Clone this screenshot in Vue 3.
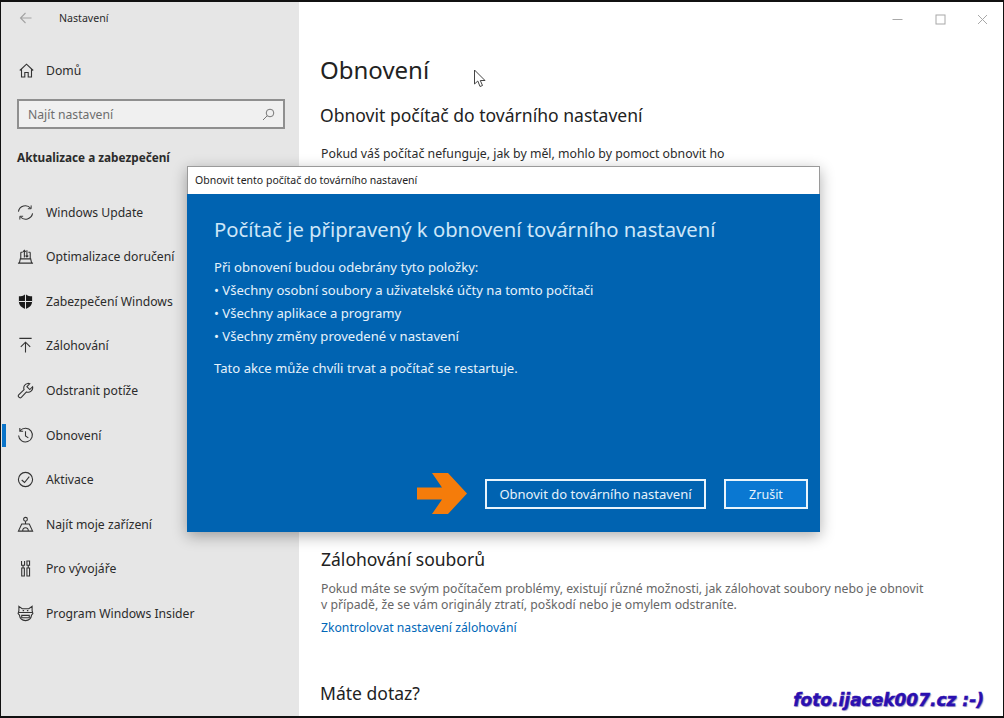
<script setup>
const nav = [
  { label: 'Windows Update', icon: 'update' },
  { label: 'Optimalizace doručení', icon: 'delivery' },
  { label: 'Zabezpečení Windows', icon: 'shield' },
  { label: 'Zálohování', icon: 'backup' },
  { label: 'Odstranit potíže', icon: 'wrench' },
  { label: 'Obnovení', icon: 'history', active: true },
  { label: 'Aktivace', icon: 'check' },
  { label: 'Najít moje zařízení', icon: 'find' },
  { label: 'Pro vývojáře', icon: 'dev' },
  { label: 'Program Windows Insider', icon: 'insider' },
]
const bullets = [
  '• Všechny osobní soubory a uživatelské účty na tomto počítači',
  '• Všechny aplikace a programy',
  '• Všechny změny provedené v nastavení',
]
</script>

<template>
  <div class="frame">
    <aside class="side">
      <div class="titlebar">
        <svg class="back" width="13" height="12" viewBox="0 0 13 12" fill="none" stroke="#a3a3a3" stroke-width="1.1"><path d="M12.500 6H1.500M6.500 1 1.500 6l5 5"/></svg>
        <span>Nastavení</span>
      </div>
      <div class="home">
        <svg width="15" height="15" viewBox="0 0 15 15" fill="none" stroke="#333" stroke-width="1.1"><path d="M.8 7.500 7.500 1.200 14.200 7.500M2.500 6V14H5.800V9.500H9.200V14H12.500V6"/></svg>
        <span>Domů</span>
      </div>
      <div class="search">
        <span>Najít nastavení</span>
        <svg width="13" height="13" viewBox="0 0 13 13" fill="none" stroke="#777" stroke-width="1"><circle cx="8" cy="5" r="3.800"/><path d="M5.200 7.800 1 12"/></svg>
      </div>
      <div class="section">Aktualizace a zabezpečení</div>
      <nav class="nav">
        <div v-for="n in nav" :key="n.label" class="item" :class="{ active: n.active }">
          <svg class="ico" width="17" height="17" viewBox="0 0 18 18" fill="none" stroke="#333" stroke-width="1.150">
            <template v-if="n.icon === 'update'">
              <path d="M1.500 8A7.500 7.500 0 0 1 14.500 4.500M16.500 10A7.500 7.500 0 0 1 3.500 13.500"/>
              <path d="M15 1.500V5H11.500M3 16.500V13H6.500" stroke-width="1"/>
            </template>
            <template v-else-if="n.icon === 'delivery'">
              <path d="M1 16H17M2.500 16 3.500 11.500H14.500L15.500 16M4 4.500V11.500M14 4.500V11.500M4 4.500H6M12 4.500H14M7.800 10V2.500M6.300 4 7.800 2.500 9.300 4M10.500 2.500V9.500M9 8 10.500 9.500 12 8"/>
            </template>
            <template v-else-if="n.icon === 'shield'">
              <path d="M9 1C7 3 4 3.500 2 3.500V9c0 4 3 6.500 7 8 4-1.500 7-4 7-8V3.500C14 3.500 11 3 9 1Z" fill="#1a1a1a" stroke="none"/>
              <path d="M9 1V17M2 9H16" stroke="#e6e6e6" stroke-width="1.100"/>
            </template>
            <template v-else-if="n.icon === 'backup'">
              <path d="M2.500 1.500H15.500M9 16.500V5.500M4 10.500 9 5.500 14 10.500"/>
            </template>
            <template v-else-if="n.icon === 'wrench'">
              <path d="M11.500 1.500a4.800 4.800 0 0 0-4 6.500L1.800 13.500a2 2 0 0 0 2.800 2.800L10 10.500a4.800 4.800 0 0 0 6.500-5.500L13.500 8 10.500 5 13.500 1.800a4.800 4.800 0 0 0-2-.3Z"/>
            </template>
            <template v-else-if="n.icon === 'history'">
              <path d="M3.300 4A7.300 7.300 0 1 1 1.700 9M3 1V4.500H6.500M9 4.500V9.500L12 11.500"/>
            </template>
            <template v-else-if="n.icon === 'check'">
              <circle cx="9" cy="9" r="7.500"/><path d="M5 9.500 8 12.200 13 6"/>
            </template>
            <template v-else-if="n.icon === 'find'">
              <circle cx="9" cy="3.500" r="2"/><path d="M9 5.500V9M5 8.500H13L16.500 16H1.500ZM6 16c0-2 1-3.500 3-3.500s3 1.500 3 3.500"/>
            </template>
            <template v-else-if="n.icon === 'dev'">
              <path d="M4.800 1V5.500H8V1M6.400 5.500V8.500M5 8.500H7.800V17H5ZM10.500 1H13.300V5.500H10.500ZM11.900 5.500V8.500M10.500 8.500H13.300V17H10.500Z"/>
            </template>
            <template v-else>
              <path d="M2 1.500 5.500 4H12.500L16 1.500V6L16.800 9 15.500 10.500C15 14 13 16.500 9 16.500S3 14 2.500 10.500L1.200 9 2 6Z"/>
              <path d="M2 8H16M5 11H13V13.500H5ZM6 6h1.500M10.500 6H12"/>
            </template>
          </svg>
          <span>{{ n.label }}</span>
        </div>
      </nav>
    </aside>

    <main class="main">
      <div class="controls">
        <svg width="11" height="11" viewBox="0 0 11 11" fill="none" stroke="#a8a8a8"><path d="M0.500 5.500H10.500"/></svg>
        <svg width="11" height="11" viewBox="0 0 11 11" fill="none" stroke="#a8a8a8"><rect x="1" y="1" width="9" height="9"/></svg>
        <svg width="11" height="11" viewBox="0 0 11 11" fill="none" stroke="#a8a8a8"><path d="M1 1 10 10M10 1 1 10"/></svg>
      </div>
      <h1>Obnovení</h1>
      <h2>Obnovit počítač do továrního nastavení</h2>
      <p class="intro">Pokud váš počítač nefunguje, jak by měl, mohlo by pomoct obnovit ho</p>
      <h2 class="backup">Zálohování souborů</h2>
      <p class="text">Pokud máte se svým počítačem problémy, existují různé možnosti, jak zálohovat soubory nebo je obnovit<br>v případě, že se vám originály ztratí, poškodí nebo je omylem odstraníte.</p>
      <a class="link">Zkontrolovat nastavení zálohování</a>
      <h2 class="ask">Máte dotaz?</h2>
    </main>

    <svg class="cursor" width="14" height="20" viewBox="0 0 14 20" fill="#fff" stroke="#444" stroke-width="1"><path d="M1.500 1V15L4.800 12 7 17.500 9.500 16.500 7.300 11.500H12Z"/></svg>

    <section class="dialog">
      <header class="dlg-title">Obnovit tento počítač do továrního nastavení</header>
      <div class="dlg-body">
        <h3>Počítač je připravený k obnovení továrního nastavení</h3>
        <p class="lead">Při obnovení budou odebrány tyto položky:</p>
        <p v-for="b in bullets" :key="b" class="bullet">{{ b }}</p>
        <p class="note">Tato akce může chvíli trvat a počítač se restartuje.</p>
        <div class="actions">
          <svg class="arrow" width="50" height="41" viewBox="0 0 50 41"><path d="M0 14.500H25L15 0H31L50 20.500 31 41H15L25 26.500H0Z" fill="#f57c0a"/></svg>
          <button class="btn reset">Obnovit do továrního nastavení</button>
          <button class="btn cancel">Zrušit</button>
        </div>
      </div>
    </section>

    <div class="mark">foto.ijacek007.cz :-)</div>
  </div>
</template>

<style>
html, body { margin: 0; overflow: hidden; background: #fff; }
</style>

<style scoped>
.frame {
  position: relative;
  box-sizing: border-box;
  width: 1004px;
  height: 718px;
  display: flex;
  overflow: hidden;
  border: 1px solid #111;
  border-width: 2px 1px 2px 1px;
  background: #fff;
  font-family: "Noto Sans", "Open Sans", sans-serif;
  color: #2b2b2b;
  font-size: 12.200px;
}
.side {
  width: 298px;
  flex: none;
  background: #e6e6e6;
  display: flex;
  flex-direction: column;
}
.titlebar {
  display: flex;
  align-items: center;
  height: 32px;
  padding-left: 18px;
  font-size: 10.600px;
}
.back { margin-right: 27px; }
.home {
  display: flex;
  align-items: center;
  gap: 12px;
  margin: 21px 0 0 18px;
  height: 30px;
}
.search {
  box-sizing: border-box;
  margin: 14px 0 0 16px;
  width: 268px;
  height: 30px;
  border: 2px solid #8f8f8f;
  background: #f0f0f0;
  display: flex;
  align-items: center;
  justify-content: space-between;
  padding: 0 8px 0 9px;
  color: #6d6d6d;
}
.section {
  margin: 19px 0 0 16px;
  font-weight: 700;
  font-size: 11.750px;
  line-height: 18px;
}
.nav { margin-top: 24px; display: flex; flex-direction: column; }
.item {
  position: relative;
  height: 44.550px;
  display: flex;
  align-items: center;
  gap: 12px;
  padding-left: 16px;
}
.item.active::before {
  content: "";
  position: absolute;
  left: 1px;
  top: 11px;
  width: 4px;
  height: 23px;
  background: #0a74c9;
}
.ico { flex: none; }
.main { flex: 1; padding-left: 21px; position: relative; }
.controls {
  position: absolute;
  top: 12px;
  right: 15px;
  display: flex;
  gap: 31.500px;
}
h1 {
  margin: 50px 0 0;
  font-size: 24px;
  line-height: 36px;
  font-weight: 400;
  color: #222;
}
h2 {
  margin: 0;
  font-size: 17.550px;
  font-weight: 400;
  line-height: 24px;
  color: #222;
}
h1 + h2 { margin-top: 15px; }
.intro { margin: 18px 0 0 1px; line-height: 18px; font-size: 12.300px; }
.backup { margin: 384px 0 0 1px; }
.text { margin: 10px 0 0 1px; line-height: 16px; color: #666; font-size: 12.250px; }
.link { display: block; margin: 6px 0 0 1px; color: #0067b8; line-height: 18px; font-size: 12.200px; }
.ask { margin-top: 44px; }
.cursor { position: absolute; left: 472px; top: 67px; }
.dialog {
  position: absolute;
  left: 186px;
  top: 164px;
  width: 633px;
  height: 366px;
  display: flex;
  flex-direction: column;
  box-shadow: 0 4px 14px rgba(0, 0, 0, .32);
}
.dlg-title {
  box-sizing: border-box;
  height: 28px;
  flex: none;
  background: #fff;
  border: 1px solid #9a9a9a;
  border-bottom: none;
  line-height: 27px;
  padding-left: 7px;
  font-size: 10.500px;
  color: #222;
}
.dlg-body {
  flex: 1;
  background: #0063b1;
  color: #e6f2fb;
  padding: 21px 12px 18px 27px;
  display: flex;
  flex-direction: column;
}
h3 {
  margin: 0;
  font-size: 20.280px;
  font-weight: 400;
  line-height: 28px;
  color: #cde6f8;
}
.dlg-body p { margin: 0; line-height: 23.300px; font-size: 13.100px; }
.dlg-body .lead { margin-top: 12.500px; }
.dlg-body .note { margin-top: 8.500px; }
.actions {
  margin-top: auto;
  display: flex;
  align-items: center;
  gap: 18px;
  justify-content: flex-end;
}
.arrow { margin-top: -1px; }
.btn {
  box-sizing: border-box;
  height: 30px;
  border: 2px solid #e8f4fc;
  color: #e6f2fb;
  font: inherit;
  font-size: 13px;
  padding: 0;
}
.reset { width: 221px; background: #0063b1; }
.cancel { width: 84px; background: #0a78d2; font-size: 12.500px; }
.mark {
  position: absolute;
  right: 19px;
  bottom: 6px;
  font-family: "DejaVu Sans", sans-serif;
  font-weight: 700;
  font-style: italic;
  font-size: 17px;
  line-height: 20px;
  color: #2a0fb0;
  -webkit-text-stroke: .5px #2a0fb0;
  text-shadow: 1px 1px 1px rgba(40, 30, 120, .45);
  white-space: nowrap;
}
</style>
